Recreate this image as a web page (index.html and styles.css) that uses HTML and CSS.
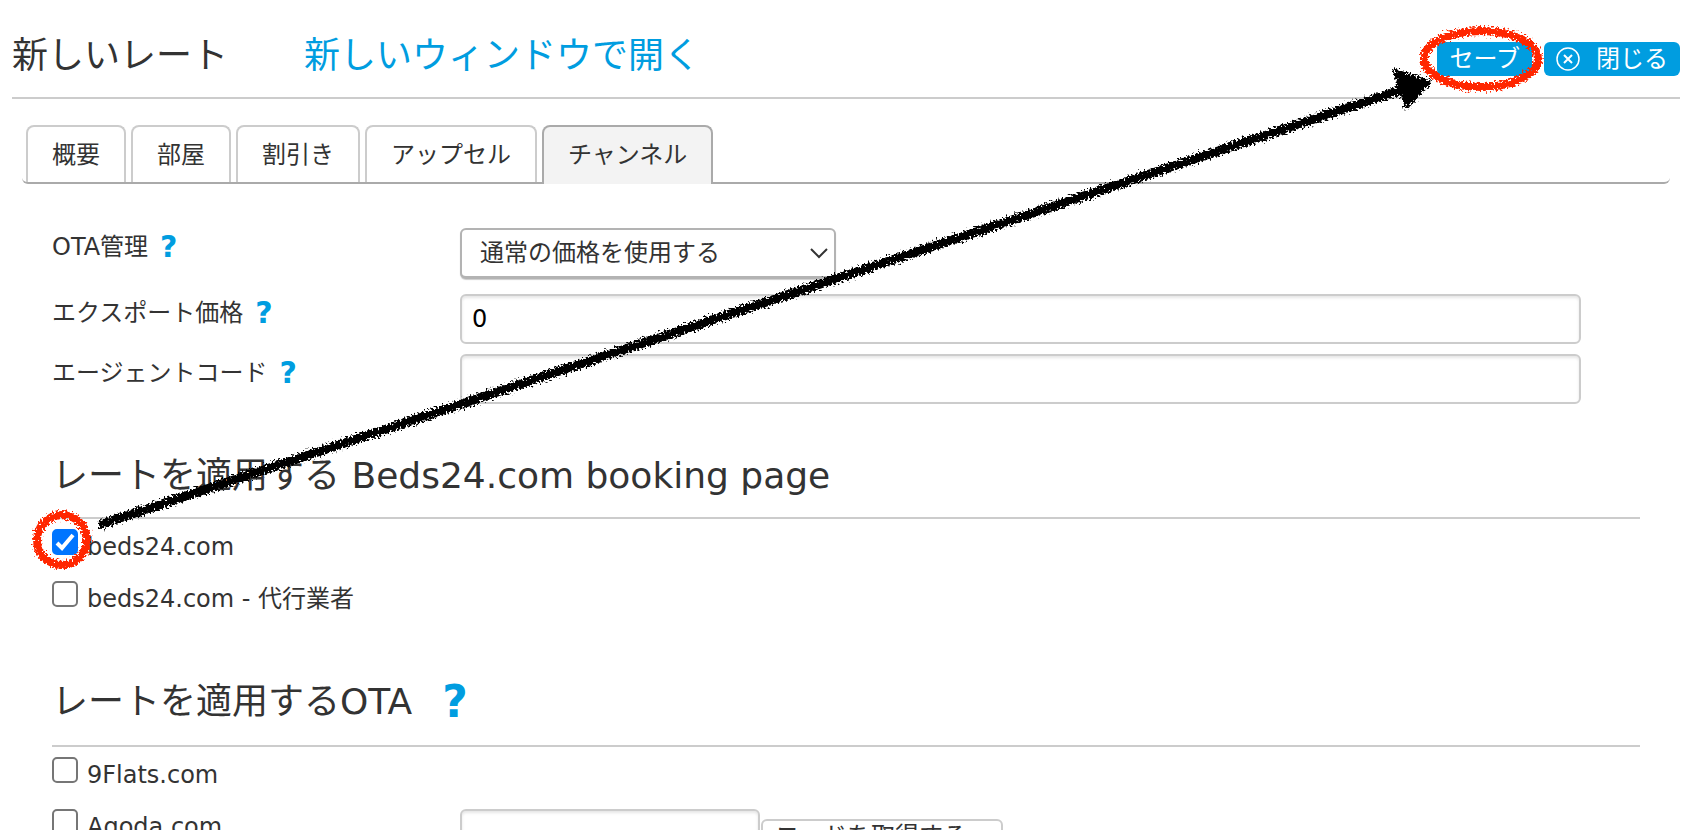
FILE: index.html
```
<!DOCTYPE html>
<html lang="ja">
<head>
  <meta charset="UTF-8" />
  <meta name="viewport" content="width=device-width, initial-scale=1" />
  <title>新しいレート</title>
  <link rel="stylesheet" href="styles.css">
</head>
<body>
  <header class="page-header">
    <h1>新しいレート</h1>
    <a class="open-window" href="#">新しいウィンドウで開く</a>
    <div class="actions">
      <button type="submit" form="rateForm" class="btn">セーブ</button>
      <button type="button" class="btn btn-close">
        <svg viewBox="0 0 24 24" width="24" height="24" fill="none" stroke="#fff" stroke-width="1.5" aria-hidden="true">
          <circle cx="12" cy="12" r="11" />
          <path d="M8 8l8 8M16 8l-8 8" stroke-width="2" />
        </svg>
        閉じる
      </button>
    </div>
  </header>

  <nav class="tabs">
    <button type="button" class="tab">概要</button>
    <button type="button" class="tab">部屋</button>
    <button type="button" class="tab">割引き</button>
    <button type="button" class="tab">アップセル</button>
    <button type="button" class="tab active">チャンネル</button>
  </nav>

  <form id="rateForm" class="panel">
    <div class="row row-select">
      <div class="label"><label for="ota">OTA管理</label><a class="help" href="#">?</a></div>
      <div class="select-wrap">
        <select id="ota">
          <option>通常の価格を使用する</option>
        </select>
        <svg class="chevron" viewBox="0 0 18 12" width="18" height="12" fill="none" stroke="#333" stroke-width="2" aria-hidden="true">
          <path d="M1 2l8 8 8-8" />
        </svg>
      </div>
    </div>
    <div class="row">
      <div class="label"><label for="price">エクスポート価格</label><a class="help" href="#">?</a></div>
      <input type="text" id="price" class="field" value="0">
    </div>
    <div class="row">
      <div class="label"><label for="agent">エージェントコード</label><a class="help" href="#">?</a></div>
      <input type="text" id="agent" class="field">
    </div>

    <h2>レートを適用する Beds24.com booking page</h2>
    <div class="check"><input type="checkbox" id="beds24" checked><label for="beds24">beds24.com</label></div>
    <div class="check"><input type="checkbox" id="beds24agent"><label for="beds24agent">beds24.com - 代行業者</label></div>

    <h2 class="with-help">レートを適用するOTA<a class="help" href="#">?</a></h2>
    <div class="check"><input type="checkbox" id="flats"><label for="flats">9Flats.com</label></div>
    <div class="row row-code">
      <div class="check"><input type="checkbox" id="agoda"><label for="agoda">Agoda.com</label></div>
      <div class="code">
        <input type="text" class="field" aria-label="Agoda.com">
        <button type="button" class="get-code">コードを取得する</button>
      </div>
    </div>
  </form>

  <!-- hand drawn marks -->
  <svg class="marks" viewBox="0 0 1682 620" width="1682" height="620" fill="none" aria-hidden="true">
    <filter id="chalk" filterUnits="userSpaceOnUse" x="0" y="0" width="1682" height="620">
      <feTurbulence type="fractalNoise" baseFrequency="0.5" numOctaves="2" seed="4" />
      <feDisplacementMap in="SourceGraphic" scale="11" xChannelSelector="R" yChannelSelector="G" />
    </filter>
    <g filter="url(#chalk)">
      <path d="M99 525L1404 89" stroke="#000" stroke-width="9" />
      <path d="M1395 71L1429 82L1407 107Z" fill="#000" stroke="#000" stroke-width="4" stroke-linejoin="round" />
      <ellipse cx="1481" cy="59" rx="57" ry="28" stroke="#ff2600" stroke-width="8" />
      <circle cx="62" cy="540" r="25" stroke="#ff2600" stroke-width="8" />
    </g>
  </svg>
</body>
</html>
```
FILE: styles.css
```
* { box-sizing: border-box; margin: 0; padding: 0; }
body { position: relative; overflow-x: hidden; background: #fff; color: #333; font-family: "DejaVu Sans", "Noto Sans CJK JP", sans-serif; font-size: 24px; line-height: 36px; }
button, select, input { font-family: inherit; font-size: 24px; color: inherit; }
a { color: #009de0; text-decoration: none; }

.page-header {
  display: flex;
  align-items: flex-start;
  margin: 0 2px 0 12px;
  padding-top: 28px;
  height: 99px;
  border-bottom: 2px solid #ccc;
}

h1, .open-window { font-size: 36px; font-weight: normal; line-height: 56px; }
.open-window { margin-left: 76px; }

.actions { display: flex; gap: 12px; margin: 14px 0 0 auto; }

.btn {
  display: flex;
  align-items: center;
  gap: 16px;
  height: 34px;
  padding: 0 12px;
  border: none;
  border-radius: 6px;
  background: #009de0;
  color: #fff;
  line-height: 34px;
  cursor: pointer;
}

.tabs {
  display: flex;
  gap: 5px;
  margin: 26px 12px 0 22px;
  padding: 0 4px;
  border-bottom: 2px solid #aaa;
  border-radius: 6px;
}

.tab {
  height: 57px;
  padding: 0 24px 4px;
  border: 2px solid #ccc;
  border-bottom: none;
  border-radius: 8px 8px 0 0;
  background: #fff;
  cursor: pointer;
}

.tab.active {
  height: 59px;
  margin-bottom: -2px;
  padding-bottom: 6px;
  border-color: #aaa;
  background: #f3f3f3;
}

.panel { padding: 44px 42px 20px 52px; }

.row {
  display: grid;
  grid-template-columns: 408px 1fr;
  margin: 0 59px 10px 0;
}

.row-select { margin-bottom: 15px; }
.label { display: flex; align-items: center; height: 38px; gap: 12px; }
.help { font-weight: bold; font-size: 30px; }

.field {
  width: 100%;
  height: 50px;
  padding: 0 10px;
  border: 2px solid #ccc;
  border-radius: 6px;
  box-shadow: inset 0 2px 3px rgba(0, 0, 0, 0.1);
  color: #000;
}

.select-wrap { position: relative; width: 376px; }

.select-wrap select {
  display: block;
  width: 100%;
  height: 51px;
  padding: 0 40px 0 18px;
  border: 2px solid #b3b3b3;
  border-bottom: 3px solid #b3b3b3;
  border-radius: 6px;
  box-shadow: 0 1px 1px #ccc;
  background: #fff;
  appearance: none;
}

.chevron { position: absolute; right: 8px; top: 19px; pointer-events: none; }

h2 {
  display: flex;
  align-items: center;
  height: 85px;
  margin: 30px 0 10px;
  border-bottom: 2px solid #ccc;
  font-size: 36px;
  font-weight: normal;
}

h2.with-help { height: 84px; padding-bottom: 4px; }
h2 .help { margin-left: 30px; font-size: 44px; }

.check { display: flex; align-items: flex-start; height: 52px; gap: 9px; }

.check input {
  appearance: none;
  width: 26px;
  height: 26px;
  border: 2px solid #767676;
  border-radius: 5px;
  background: #fff;
}

.check input:checked {
  border-color: #0075ff;
  background: #0075ff url("data:image/svg+xml,%3Csvg xmlns='http://www.w3.org/2000/svg' viewBox='0 0 22 22' fill='none' stroke='white' stroke-width='4'%3E%3Cpath d='M3 12l5 5L19 4'/%3E%3C/svg%3E") center / 22px 22px no-repeat;
}

.code { display: flex; align-items: flex-start; gap: 1px; }
.code .field { width: 300px; }

.get-code {
  height: 34px;
  margin-top: 10px;
  padding: 0 34px 0 12px;
  border: 2px solid #ccc;
  border-radius: 6px;
  background: #fff;
  line-height: 28px;
}

.marks { position: absolute; left: 0; top: 0; pointer-events: none; }
```
